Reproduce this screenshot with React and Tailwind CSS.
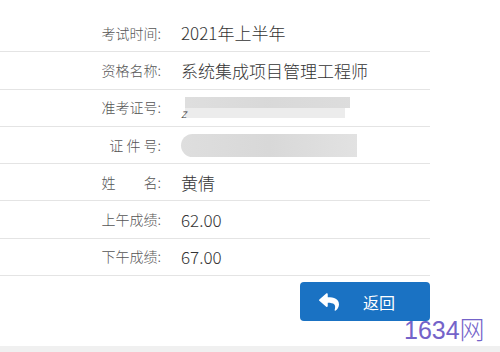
import React from "react";
import { FaReply } from "react-icons/fa";

const rows = [
  { label: "考试时间:", value: "2021年上半年" },
  { label: "资格名称:", value: "系统集成项目管理工程师" },
  { label: "准考证号:", blur: "a" },
  { label: "证 件 号:", blur: "b" },
  { label: "姓　　名:", value: "黄倩" },
  { label: "上午成绩:", value: "62.00" },
  { label: "下午成绩:", value: "67.00" },
];

function BlurA() {
  return (
    <div className="relative h-[22px] w-[168px]">
      <div className="absolute left-[4px] top-0 h-[11px] w-[165px] bg-gradient-to-r from-[#d6d6d6] via-[#cfcfcf] to-[#d4d4d4] opacity-80" />
      <div className="absolute left-[4px] top-[11px] h-[10px] w-[160px] bg-[#ececec]" />
      <div className="absolute left-0 top-[10px] text-[12px] italic leading-none text-[#333]">z</div>
    </div>
  );
}

function BlurB() {
  return (
    <div className="h-[23px] w-[176px] rounded-l-full rounded-r-[4px] bg-gradient-to-r from-[#dedede] via-[#d8d8d8] to-[#e2e2e2]" />
  );
}

export default function App() {
  return (
    <div
      className="relative h-[352px] w-[500px] overflow-hidden bg-white"
      style={{ fontFamily: '"Noto Sans CJK SC", "Noto Sans", sans-serif' }}
    >
      <div className="w-[430px] pt-[15px]">
        {rows.map((r, i) => (
          <div
            key={i}
            className="flex h-[37.3px] items-center border-b border-[#e4e4e4]"
          >
            <div className="w-[161px] whitespace-pre text-right text-[14px] font-light text-[#555]">
              {r.label}
            </div>
            <div className="ml-[20px] text-[17px] font-light text-[#333]">
              {r.blur === "a" ? <BlurA /> : r.blur === "b" ? <BlurB /> : r.value}
            </div>
          </div>
        ))}
        <div className="flex justify-end pt-[6px]">
          <button className="flex h-[39px] w-[130px] items-center rounded-[4px] bg-[#1a72c3] pl-[16px] text-white">
            <FaReply className="h-[20px] w-[26px]" />
            <span className="ml-[21px] text-[16px]">返回</span>
          </button>
        </div>
      </div>
      <div className="absolute left-[404px] top-[318px] text-[25px] font-light leading-none text-[#7463c9]" style={{ fontFamily: '"Liberation Sans", "Noto Sans CJK SC", sans-serif' }}>
        1634网
      </div>
      <div className="absolute bottom-0 left-0 h-[6px] w-full bg-[#f0f0f0]" />
    </div>
  );
}
